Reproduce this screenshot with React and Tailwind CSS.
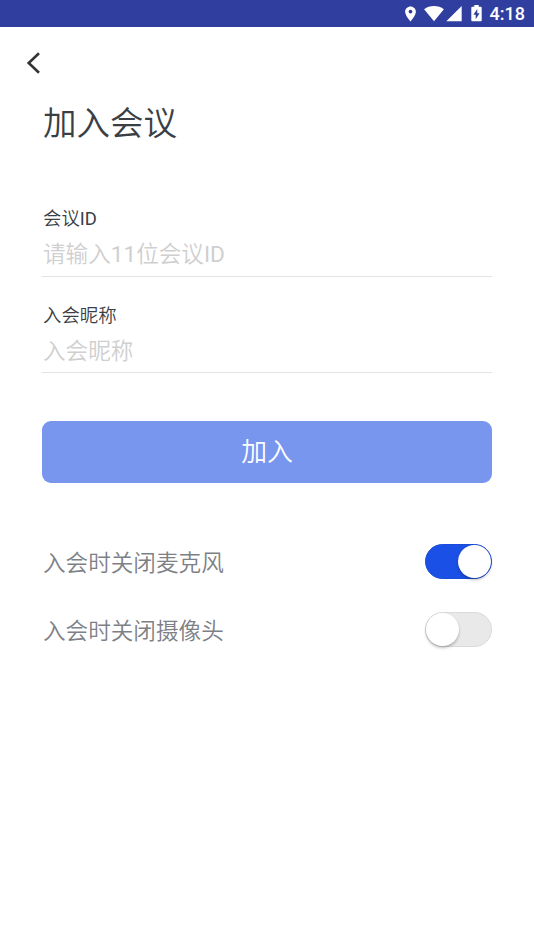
import React, { useState } from "react";

function StatusBar() {
  return (
    <div className="flex h-[27px] items-center justify-end bg-[#303f9f] pr-[9px] text-white">
      <svg width="11" height="16" viewBox="0 0 11 16" fill="currentColor" className="mr-[8px]">
        <path
          fillRule="evenodd"
          d="M5.500 0.400C2.600 0.400 0.100 2.700 0.100 5.600c0 3.900 5.400 10 5.400 10s5.400-6.100 5.400-10C10.900 2.700 8.400 0.400 5.500 0.400zM5.500 3.700a1.900 1.900 0 1 1 0 3.800a1.900 1.900 0 0 1 0-3.800z"
        />
      </svg>
      <svg width="20" height="16" viewBox="0 0 20 16" fill="currentColor" className="mr-[2px]">
        <path d="M10 15.300L0.100 3.200C3 1.100 6.300 0 10 0s7 1.100 9.900 3.200z" />
      </svg>
      <svg width="16" height="16" viewBox="0 0 16 16" fill="currentColor" className="mr-[9px]">
        <path d="M15.700 0v15.300H0.300z" />
      </svg>
      <svg width="11" height="17" viewBox="0 0 11 17" fill="currentColor" className="mr-[8px]">
        <path
          fillRule="evenodd"
          d="M3.300 0h4.400v1.700h2q1 0 1 1v12.600q0 1-1 1H1.300q-1 0-1-1V2.700q0-1 1-1h2zM6.300 4.100L2.400 9.800h2.300v4.400L8.600 8.300H6.300z"
        />
      </svg>
      <span className="text-[18px] leading-[27px] font-medium">4:18</span>
    </div>
  );
}

function Field({ label, placeholder }) {
  return (
    <label className="flex flex-col border-b border-[#e2e2e2] first:pb-px">
      <span className="pl-px text-[18.4px] leading-[28px] text-[#3a3f45]">{label}</span>
      <input
        placeholder={placeholder}
        className="h-[42px] w-full bg-transparent pl-px text-[22.6px] text-[#3a3f45] outline-none placeholder:text-[#cfcfcf]"
      />
    </label>
  );
}

function Toggle({ label, initial }) {
  const [on, setOn] = useState(initial);
  return (
    <div className="flex h-[35px] items-center justify-between">
      <span className="pt-[3px] pl-px text-[22.6px] leading-[35px] text-[#7d8085]">{label}</span>
      <button
        role="switch"
        aria-checked={on}
        aria-label={label}
        onClick={() => setOn(!on)}
        className={
          on
            ? "flex h-[35px] w-[67px] items-center justify-end rounded-full border border-[#1b4bd8] bg-[#1b50e6]"
            : "flex h-[35px] w-[67px] items-center justify-start rounded-full border border-[#dadada] bg-[#e9e9e9]"
        }
      >
        <span className="h-[33px] w-[33px] rounded-full bg-white shadow-[0_2px_3px_rgba(0,0,0,0.25)]" />
      </button>
    </div>
  );
}

export default function App() {
  return (
    <div className="min-h-[950px] w-full bg-white font-[Roboto,'Noto_Sans_CJK_SC_DemiLight','Noto_Sans_CJK_SC',sans-serif]">
      <StatusBar />
      <header className="flex h-[71px] items-center pl-[26px]">
        <button aria-label="返回">
          <svg width="15" height="22" viewBox="0 0 15 22" fill="none" stroke="#333" strokeWidth="2.600">
            <path d="M13 1.200L2.700 11L13 20.800" />
          </svg>
        </button>
      </header>
      <main className="px-[42px]">
        <h1 className="pt-[2px] pl-px text-[33.5px] leading-[48px] text-[#3a3f45]">加入会议</h1>
        <div className="mt-[57px] flex flex-col gap-[25px]">
          <Field label="会议ID" placeholder="请输入11位会议ID" />
          <Field label="入会昵称" placeholder="入会昵称" />
        </div>
        <button className="mt-[48px] h-[62px] w-full rounded-[9px] bg-[#7896ee] pt-px text-[25.8px] text-white">
          加入
        </button>
        <div className="mt-[61px] flex flex-col gap-[33px]">
          <Toggle label="入会时关闭麦克风" initial={true} />
          <Toggle label="入会时关闭摄像头" initial={false} />
        </div>
      </main>
    </div>
  );
}
